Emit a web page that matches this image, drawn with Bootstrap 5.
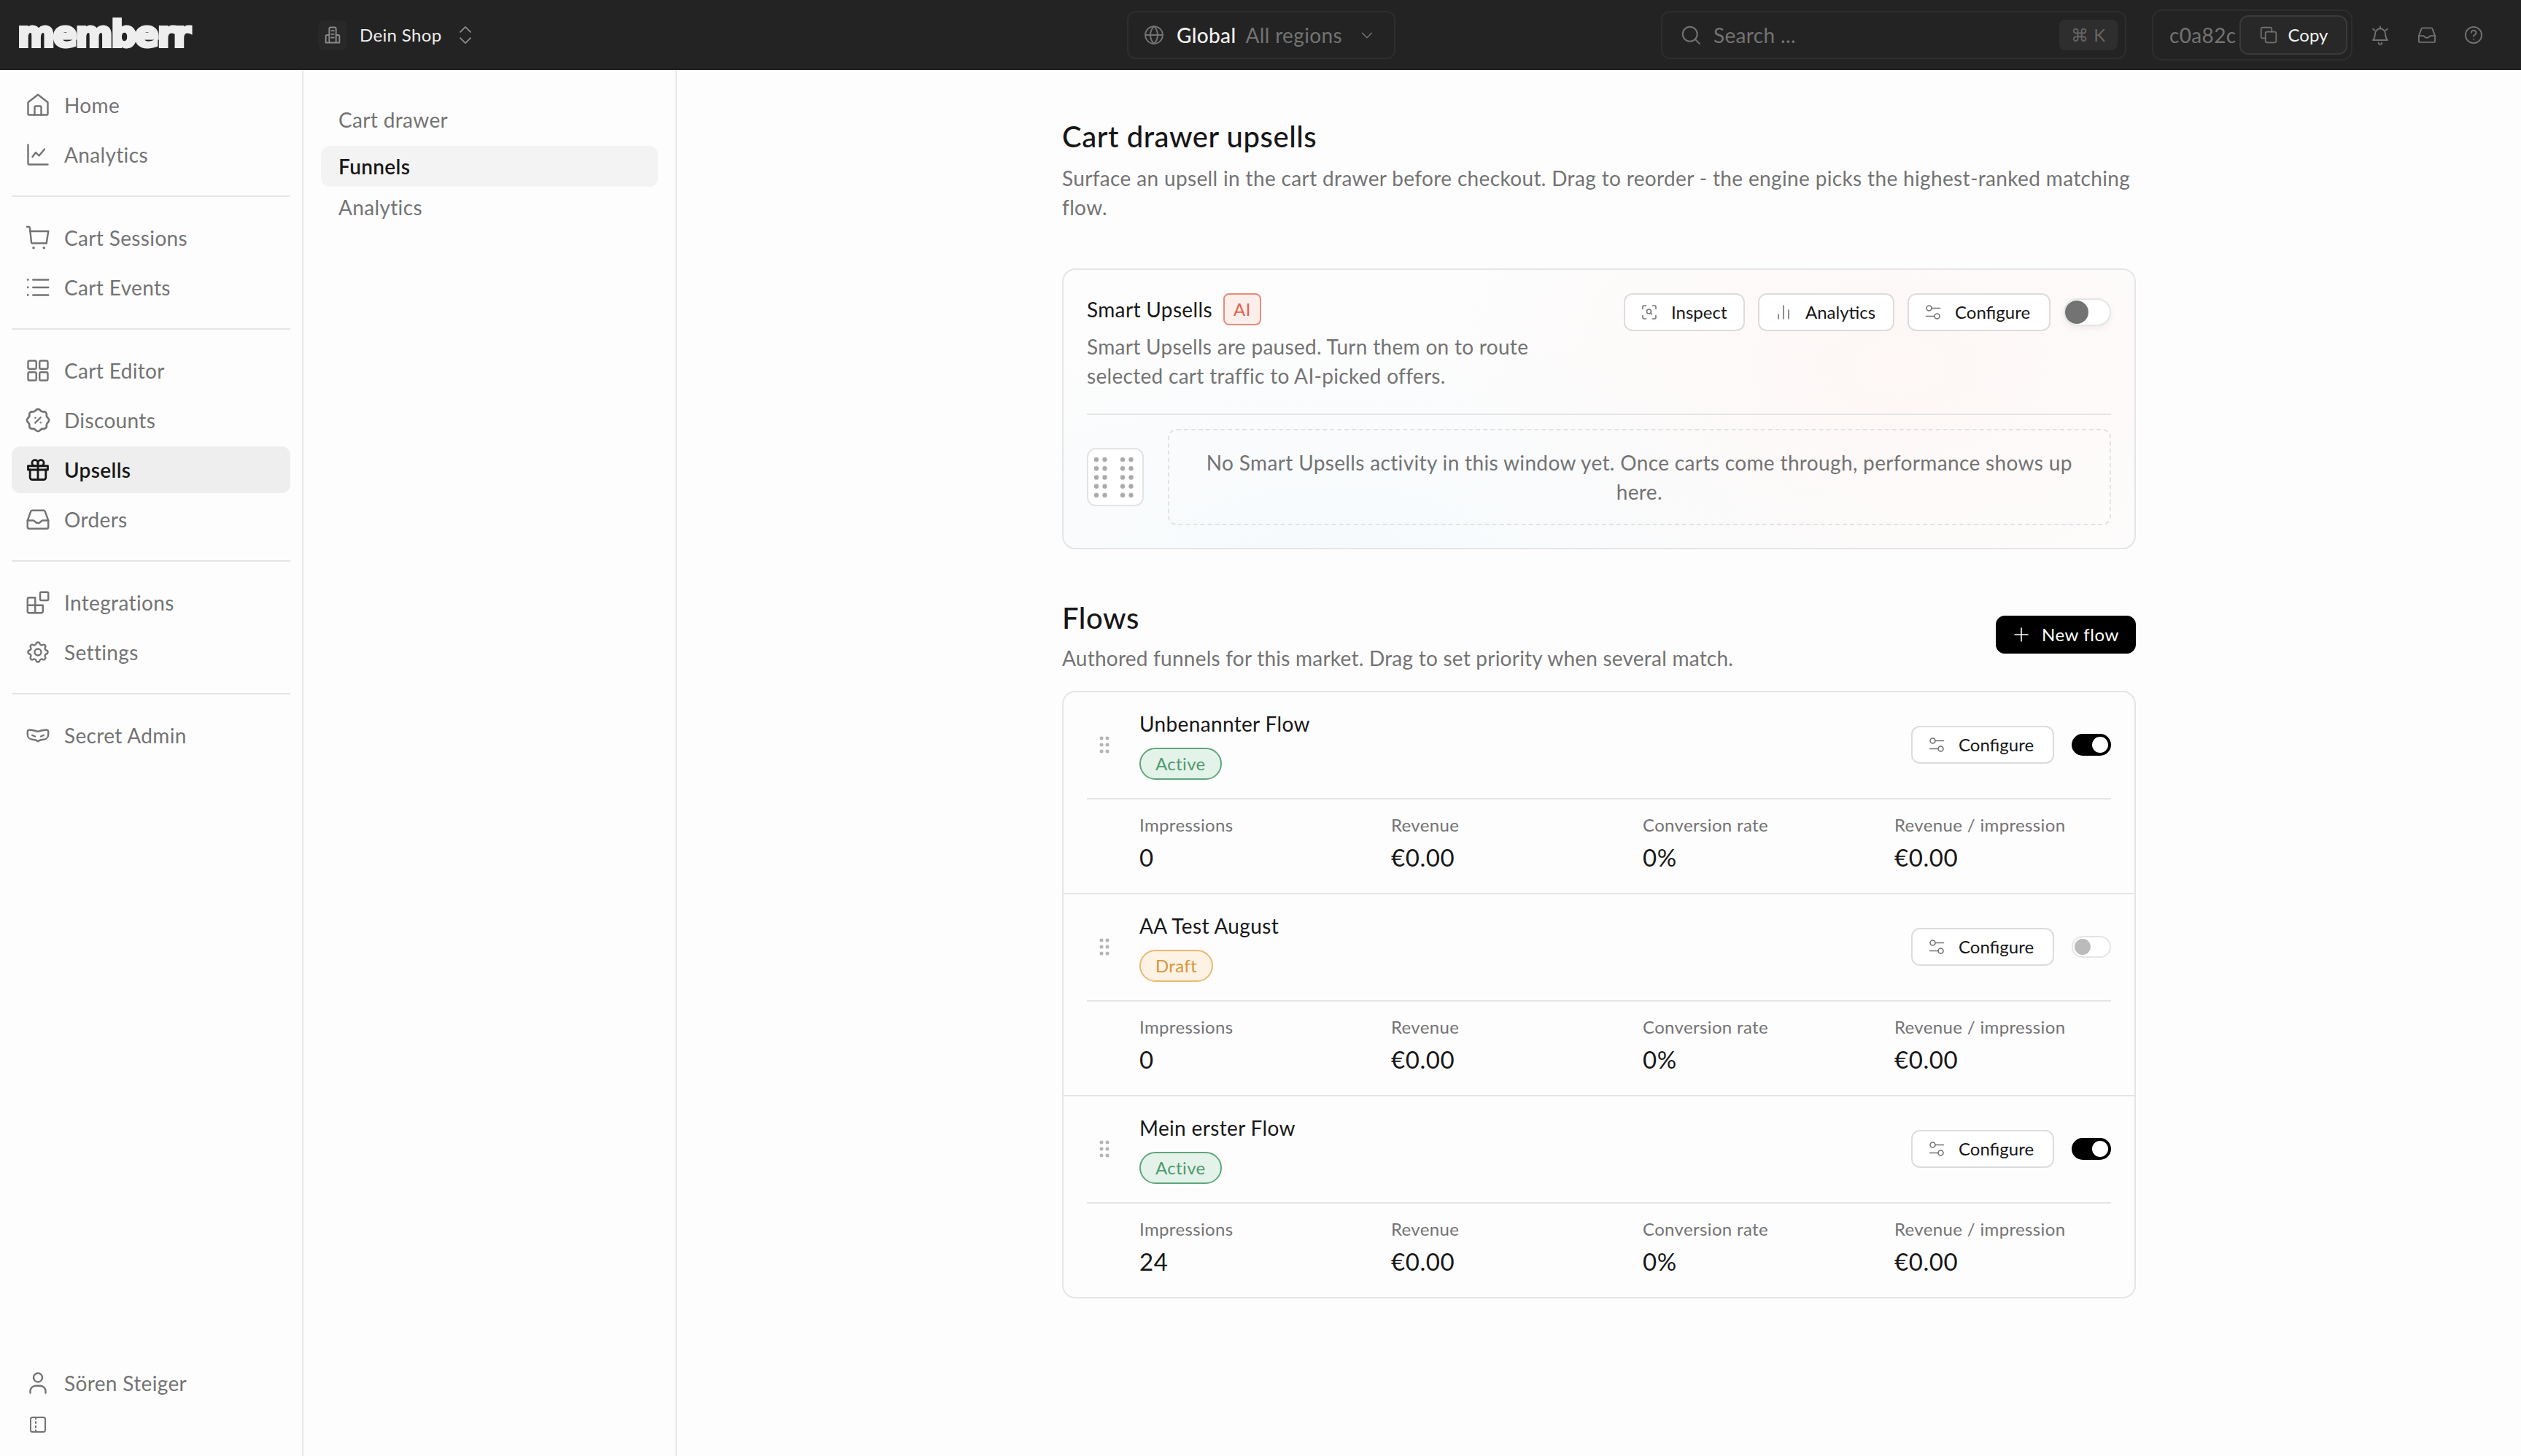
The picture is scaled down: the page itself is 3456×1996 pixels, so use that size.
<!DOCTYPE html>
<html lang="en">
<head>
<meta charset="utf-8">
<title>Cart drawer upsells</title>
<link href="https://cdn.jsdelivr.net/npm/bootstrap@5.3.0/dist/css/bootstrap.min.css" rel="stylesheet">
<style>
html,body{height:100%}
body{font-family:"Lato","Liberation Sans",sans-serif;font-size:28px;line-height:40px;letter-spacing:.35px;color:#171717;background:#fdfdfd;overflow:hidden}
svg.ic{fill:none;stroke:currentColor;stroke-width:1.6;stroke-linecap:round;stroke-linejoin:round;flex:none}
.app-shell{height:1996px}
.top-bar{height:96px;background:#232323;padding-left:24px;color:#eee}
.brand-area{width:412px;flex:none}
.brand-word{font-family:"DejaVu Sans",sans-serif;font-weight:700;font-size:49px;line-height:44px;letter-spacing:-2.4px;color:#eee;-webkit-text-stroke:4px #eee;display:block}
.shop-area{width:1109px;flex:none;font-size:24px;color:#eee}
.shop-icon{width:40px;height:40px;border-radius:8px;background:#282828;color:#8a8a8a;margin-right:17px}
.chev-pair{color:#8a8a8a;margin-left:19px}
.dark-box{border:2px solid #2e2e2e;border-radius:12px;height:66px;flex:none}
.region-box{width:368px;padding:0 26px 0 20px;margin-right:364px;color:#737373}
.region-box b{font-weight:500;color:#f2f2f2;margin:0 13px 0 16px}
.search-box{width:638px;padding:0 10px 0 24px;margin-right:35px;color:#737373}
.search-box span.txt{margin-left:16px}
.kbd-chip{width:80px;height:42px;background:#2e2e2e;border-radius:8px;color:#666;font-size:24px}
.token-box{width:275px;height:70px;padding:0 5px 0 22px;color:#737373;border-radius:14px}
.token-text{width:96px;overflow:hidden;font-size:28px;white-space:nowrap}
.copy-btn{--bs-btn-color:#f2f2f2;--bs-btn-bg:#282828;--bs-btn-border-color:#3a3a3a;--bs-btn-hover-color:#fff;--bs-btn-hover-bg:#2e2e2e;--bs-btn-hover-border-color:#3a3a3a;--bs-btn-border-width:2px;--bs-btn-border-radius:12px;--bs-btn-font-size:24px;--bs-btn-padding-x:0;--bs-btn-padding-y:0;width:148px;height:54px;gap:14px}
.copy-btn svg{color:#737373}
.top-icons{color:#737373;gap:36px;margin-left:24px}
.side-col{width:416px;border-right:2px solid #e8e8e8;padding:16px 16px 22px}
.side-link{height:64px;padding-left:18px;gap:18px;border-radius:12px;color:#737373;text-decoration:none}
.side-link + .side-link{margin-top:4px}
.side-link.on{background:#eeeeee;color:#171717;font-weight:600}
.side-link.on svg{stroke-width:1.9}
.side-rule{height:2px;background:#e5e5e5;margin:24px 0;opacity:1;border:0}
.panel-link{height:42px;margin-top:4px;padding-left:24px;color:#737373}
.sub-col{width:512px;border-right:2px solid #e8e8e8;padding:0 24px 0 24px}
.sub-head{padding:48px 0 0 24px;height:105px;margin-bottom:-1px;color:#737373;line-height:40px}
.sub-link{height:56px;padding-left:24px;border-radius:12px;color:#737373;text-decoration:none}
.sub-link.on{background:#f3f3f3;color:#171717;font-weight:600}
.main-col{min-width:0}
.main-wrap{width:1472px;margin:0 auto;padding-top:64px}
.title-h{font-family:inherit;font-size:40px;line-height:54px;font-weight:500;letter-spacing:.55px;margin:0;color:#171717}
.muted-txt{color:#737373}
.pad-desc{margin:10px 0 64px}
.smart-panel{height:385px;border:2px solid #e5e5e5;border-radius:18px;padding:32px;background:radial-gradient(ellipse 620px 380px at 78% 35%,rgba(255,232,226,.28),transparent),radial-gradient(ellipse 800px 300px at 25% 100%,rgba(226,240,250,.25),transparent),#fdfdfd}
.smart-name{height:44px}
.ai-chip{width:52px;height:44px;border:2px solid #e58d7c;border-radius:8px;background:#fbeeeb;color:#dd6650;font-size:24px;margin-left:15px}
.smart-copy{width:700px;margin-top:9px;letter-spacing:.3px}
.ghost-btn{--bs-btn-color:#171717;--bs-btn-bg:#fff;--bs-btn-border-color:#dcdcdc;--bs-btn-hover-color:#171717;--bs-btn-hover-bg:#fff;--bs-btn-hover-border-color:#dcdcdc;--bs-btn-border-width:2px;--bs-btn-border-radius:12px;--bs-btn-font-size:24px;--bs-btn-padding-x:21px;--bs-btn-padding-y:0;height:52px;gap:18px;white-space:nowrap}
.ghost-btn svg{color:#737373}
.w-cfg{width:196px}
.w-ana{width:187px}
.w-ins{width:166px}
.pill-switch{display:block;position:relative;border:2px solid #e5e5e5;border-radius:99px;background:#fff;flex:none}
.pill-switch i{position:absolute;top:50%;transform:translateY(-50%);border-radius:50%;display:block}
.sw-lg{width:65px;height:38px;box-shadow:0 4px 10px rgba(0,0,0,.05)}
.sw-lg i{left:0;width:32px;height:32px;background:#737373}
.sw-sm{width:54px;height:30px}
.sw-sm i{width:22px;height:22px}
.sw-sm.is-on{background:#000;border-color:#000}
.sw-sm.is-on i{right:2px;background:#fff}
.sw-sm.is-off i{left:2px;background:#bbb}
.smart-rule{height:2px;background:#e5e5e5;border:0;opacity:1;margin:32px 0 19px}
.dot-box{width:80px;height:80px;border:2px solid #e3e3e3;border-radius:12px;background:#fff;margin-right:33px}
.dash-box{height:132px;border:2px dashed #e3e3e3;border-radius:12px;padding:24px 36px;text-align:center;color:#737373}
.flows-head{margin-top:67px;margin-bottom:25px}
.solid-btn{--bs-btn-color:#fff;--bs-btn-bg:#000;--bs-btn-border-color:#000;--bs-btn-hover-color:#fff;--bs-btn-hover-bg:#000;--bs-btn-hover-border-color:#000;--bs-btn-border-radius:12px;--bs-btn-font-size:24px;--bs-btn-padding-x:0;--bs-btn-padding-y:0;width:192px;height:52px;gap:16px;margin-top:-3px;letter-spacing:.6px}
.flows-note{margin-top:8px;letter-spacing:.23px}
.flow-stack{border:2px solid #e5e5e5;border-radius:18px;background:#fdfdfd}
.flow-item{padding:23px 32px 27px;height:275px}
.flow-item + .flow-item{border-top:2px solid #e5e5e5;height:277px}
.grip-cell{width:48px;margin-right:24px;color:#b5b5b5}
.state-chip{display:inline-flex;align-items:center;height:44px;padding:0 20px;border-radius:99px;border:2px solid;font-size:24px;margin-top:13px}
.state-on{background:#e4f3ea;border-color:#5fa57c;color:#4f9a6f}
.state-draft{background:#fdf2e3;border-color:#e9b873;color:#d9953a}
.flow-rule{height:2px;background:#e5e5e5;border:0;opacity:1;margin:25px 0 17px}
.metric-cap{font-size:24px;line-height:36px;color:#737373}
.metric-val{font-size:33px;line-height:44px;margin-top:4px;letter-spacing:.6px;color:#171717}
.metric-row{margin-left:72px}
</style>
</head>
<body>
<svg width="0" height="0" class="position-absolute">
<defs>
<symbol id="i-home" viewBox="0 0 24 24"><path d="M3 20V9.500l9-7 9 7V20a1 1 0 0 1-1 1H4a1 1 0 0 1-1-1z"/><path d="M9 21v-7a1 1 0 0 1 1-1h4a1 1 0 0 1 1 1v7"/></symbol>
<symbol id="i-chart" viewBox="0 0 24 24"><path d="M3 3v17a1 1 0 0 0 1 1h17"/><path d="M7 14l3-4 3 3 5-6"/></symbol>
<symbol id="i-cart" viewBox="0 0 24 24"><path d="M2 2h1.600a1 1 0 0 1 1 .9L6 16a1 1 0 0 0 1 1h12.500"/><path d="M4.800 6H21.500l-1.700 11"/><path d="M8 21.200h.01M17.500 21.200h.01" stroke-width="2.400"/></symbol>
<symbol id="i-list" viewBox="0 0 24 24"><path d="M7.500 5h14M7.500 12h14M7.500 19h14"/><path d="M2.800 5h.01M2.800 12h.01M2.800 19h.01" stroke-width="1.900"/></symbol>
<symbol id="i-grid" viewBox="0 0 24 24"><rect x="3" y="3" width="7.500" height="7.500" rx="1.400"/><rect x="13.500" y="3" width="7.500" height="7.500" rx="1.400"/><rect x="3" y="13.500" width="7.500" height="7.500" rx="1.400"/><rect x="13.500" y="13.500" width="7.500" height="7.500" rx="1.400"/></symbol>
<symbol id="i-disc" viewBox="0 0 24 24"><path d="M5 7.200a2.200 2.200 0 0 1 2.200-2.200h1a2.200 2.200 0 0 0 1.550-.64l.7-.7a2.200 2.200 0 0 1 3.120 0l.7.7c.412.41.97.64 1.550.64h1a2.200 2.200 0 0 1 2.200 2.200v1c0 .58.23 1.138.64 1.550l.7.7a2.200 2.200 0 0 1 0 3.120l-.7.7a2.200 2.200 0 0 0-.64 1.550v1a2.200 2.200 0 0 1-2.200 2.200h-1a2.200 2.200 0 0 0-1.550.64l-.7.7a2.200 2.200 0 0 1-3.120 0l-.7-.7a2.200 2.200 0 0 0-1.550-.64h-1a2.200 2.200 0 0 1-2.200-2.200v-1a2.200 2.200 0 0 0-.64-1.550l-.7-.7a2.200 2.200 0 0 1 0-3.120l.7-.7a2.200 2.200 0 0 0 .64-1.550v-1" transform="translate(-1.400 -1.400) scale(1.120)"/><path d="M9.500 14.500l5-5M9.600 9.800h.01M14.400 14.200h.01"/></symbol>
<symbol id="i-gift" viewBox="0 0 24 24"><path d="M4.800 12v7a2 2 0 0 0 2 2h10.400a2 2 0 0 0 2-2v-7M12 5.500V21"/><path d="M12 8.500V5.500a2.700 2.700 0 1 0-2.700 3M12 8.500V5.500a2.700 2.700 0 1 1 2.700 3"/><path d="M3 8.500h18v3.500H3z"/></symbol>
<symbol id="i-inbox" viewBox="0 0 24 24"><path d="M2.500 13l3-8.200a1.500 1.500 0 0 1 1.400-1h10.200a1.500 1.500 0 0 1 1.400 1l3 8.200v6a1.500 1.500 0 0 1-1.500 1.500H4A1.500 1.500 0 0 1 2.500 19z"/><path d="M2.500 13H8c1 0 1.300 2.300 4 2.300s3-2.300 4-2.300h5.500"/></symbol>
<symbol id="i-plug" viewBox="0 0 24 24"><path d="M9.500 7.500H4A1.500 1.500 0 0 0 2.500 9v11A1.500 1.500 0 0 0 4 21.500h11a1.500 1.500 0 0 0 1.500-1.500v-5.500h-7zM2.500 14.500h7M9.500 14.500v7"/><rect x="14" y="2.500" width="7.500" height="7.500" rx="1"/></symbol>
<symbol id="i-gear" viewBox="0 0 24 24"><path d="M10.325 4.317c.426-1.756 2.924-1.756 3.350 0a1.724 1.724 0 0 0 2.573 1.066c1.543-.94 3.310.826 2.370 2.370a1.724 1.724 0 0 0 1.065 2.572c1.756.426 1.756 2.924 0 3.350a1.724 1.724 0 0 0-1.066 2.573c.94 1.543-.826 3.310-2.370 2.370a1.724 1.724 0 0 0-2.572 1.065c-.426 1.756-2.924 1.756-3.350 0a1.724 1.724 0 0 0-2.573-1.066c-1.543.94-3.310-.826-2.370-2.370a1.724 1.724 0 0 0-1.065-2.572c-1.756-.426-1.756-2.924 0-3.350a1.724 1.724 0 0 0 1.066-2.573c-.94-1.543.826-3.310 2.370-2.370 1 .608 2.296.07 2.572-1.065z"/><circle cx="12" cy="12" r="3"/></symbol>
<symbol id="i-mask" viewBox="0 0 24 24"><path d="M2.500 8.800c0-1.200 1-2 2.200-1.800 3 .4 5 .8 7.300 1.600 2.300-.8 4.300-1.200 7.300-1.600 1.200-.2 2.200.6 2.200 1.800v2.500c0 3-2.500 4.700-5.500 4.700-1.600 0-2.700.6-4 1.500-1.300-.9-2.400-1.500-4-1.500-3 0-5.500-1.700-5.500-4.700z"/><path d="M6.800 12l2.500 1M17.200 12l-2.500 1"/></symbol>
<symbol id="i-user" viewBox="0 0 24 24"><circle cx="12" cy="7" r="4"/><path d="M5 21v-1.500a5 5 0 0 1 5-5h4a5 5 0 0 1 5 5V21"/></symbol>
<symbol id="i-panel" viewBox="0 0 24 24"><rect x="2" y="2" width="20" height="20" rx="2.500" stroke-width="2"/><path d="M9 2.500v2M9 8v2M9 14v2M9 19.500v2" stroke-width="2"/></symbol>
<symbol id="i-build" viewBox="0 0 24 24"><path d="M8 21V4.500A1.500 1.500 0 0 1 9.500 3h5A1.500 1.500 0 0 1 16 4.500V21M8 12H5.500A1.500 1.500 0 0 0 4 13.500V21h16v-7.500a1.500 1.500 0 0 0-1.500-1.500H16M10.500 7h3M10.500 11h3M10.500 15h3"/></symbol>
<symbol id="i-updown" viewBox="0 0 24 24"><path d="M6 8.500l6-6 6 6M6 15.500l6 6 6-6"/></symbol>
<symbol id="i-globe" viewBox="0 0 24 24"><circle cx="12" cy="12" r="9.500"/><path d="M2.500 12h19M12 2.500c3 3 4 6 4 9.500s-1 6.500-4 9.500c-3-3-4-6-4-9.500s1-6.500 4-9.500z"/></symbol>
<symbol id="i-down" viewBox="0 0 24 24"><path d="M5 9l7 7 7-7"/></symbol>
<symbol id="i-search" viewBox="0 0 24 24"><circle cx="11" cy="11" r="8"/><path d="M17 17l4.500 4.500"/></symbol>
<symbol id="i-copy" viewBox="0 0 24 24"><rect x="8" y="8" width="13.500" height="13.500" rx="2"/><path d="M16 8V4.500a2 2 0 0 0-2-2H4.500a2 2 0 0 0-2 2V14a2 2 0 0 0 2 2H8"/></symbol>
<symbol id="i-bell" viewBox="0 0 24 24"><path d="M12 2v2.500M12 4.500a6 6 0 0 1 6 6c0 5 1.500 6 2.500 7.500h-17C4.500 16.500 6 15.500 6 10.500a6 6 0 0 1 6-6zM10 21a2 2 0 0 0 4 0"/><path d="M5.500 6.500l-2-1.500M18.500 6.500l2-1.500"/></symbol>
<symbol id="i-help" viewBox="0 0 24 24"><circle cx="12" cy="12" r="9.500"/><path d="M9.300 9.300a2.800 2.800 0 1 1 3.900 2.600c-.8.400-1.200 1-1.200 1.800M12 17h.01"/></symbol>
<symbol id="i-scan" viewBox="0 0 24 24"><path d="M3 7.500V4.500A1.500 1.500 0 0 1 4.500 3h3M16.500 3h3A1.500 1.500 0 0 1 21 4.500v3M3 16.500v3A1.500 1.500 0 0 0 4.500 21h3M16.500 21h3a1.500 1.500 0 0 0 1.500-1.500v-3"/><circle cx="11.500" cy="11" r="3"/><path d="M13.800 13.300l1.700 1.700"/></symbol>
<symbol id="i-bars" viewBox="0 0 24 24"><path d="M5 21v-6M12 21V3M19 21V9"/></symbol>
<symbol id="i-sliders" viewBox="0 0 24 24"><circle cx="6.500" cy="6.500" r="3.500"/><path d="M10 6.500h11.500"/><circle cx="17.500" cy="17.500" r="3.500"/><path d="M14 17.500H2.500"/></symbol>
<symbol id="i-plus" viewBox="0 0 24 24"><path d="M12 3v18M3 12h18"/></symbol>
<pattern id="dotgrid" width="36" height="12.200" patternUnits="userSpaceOnUse"><circle cx="5" cy="6" r="3.200" fill="#aaa" stroke="none"/><circle cx="16.500" cy="6" r="3.200" fill="#aaa" stroke="none"/></pattern>
</defs>
</svg>

<div class="app-shell d-flex flex-column">
  <header class="top-bar d-flex align-items-center flex-none">
    <div class="brand-area"><span class="brand-word">memberr</span></div>
    <div class="shop-area d-flex align-items-center">
      <span class="shop-icon d-inline-flex align-items-center justify-content-center"><svg class="ic" width="28" height="28"><use href="#i-build"/></svg></span>
      <span>Dein Shop</span>
      <svg class="ic chev-pair" width="28" height="30"><use href="#i-updown"/></svg>
    </div>
    <div class="dark-box region-box d-flex align-items-center">
      <svg class="ic" width="30" height="30"><use href="#i-globe"/></svg><b>Global</b><span>All regions</span>
      <svg class="ic ms-auto" width="22" height="22"><use href="#i-down"/></svg>
    </div>
    <div class="dark-box search-box d-flex align-items-center">
      <svg class="ic" width="30" height="30"><use href="#i-search"/></svg><span class="txt">Search ...</span>
      <span class="kbd-chip ms-auto d-inline-flex align-items-center justify-content-center">⌘ K</span>
    </div>
    <div class="dark-box token-box d-flex align-items-center">
      <span class="token-text">c0a82c</span>
      <button type="button" class="btn copy-btn d-inline-flex align-items-center justify-content-center"><svg class="ic" width="26" height="26"><use href="#i-copy"/></svg>Copy</button>
    </div>
    <div class="top-icons d-flex align-items-center">
      <svg class="ic" width="28" height="28"><use href="#i-bell"/></svg>
      <svg class="ic" width="28" height="28"><use href="#i-inbox"/></svg>
      <svg class="ic" width="28" height="28"><use href="#i-help"/></svg>
    </div>
  </header>

  <div class="d-flex flex-grow-1" style="min-height:0">
    <nav class="side-col d-flex flex-column flex-none">
      <a class="side-link d-flex align-items-center" href="#"><svg class="ic" width="36" height="36"><use href="#i-home"/></svg>Home</a>
      <a class="side-link d-flex align-items-center" href="#"><svg class="ic" width="36" height="36"><use href="#i-chart"/></svg>Analytics</a>
      <hr class="side-rule">
      <a class="side-link d-flex align-items-center" href="#"><svg class="ic" width="36" height="36"><use href="#i-cart"/></svg>Cart Sessions</a>
      <a class="side-link d-flex align-items-center" href="#"><svg class="ic" width="36" height="36"><use href="#i-list"/></svg>Cart Events</a>
      <hr class="side-rule">
      <a class="side-link d-flex align-items-center" href="#"><svg class="ic" width="36" height="36"><use href="#i-grid"/></svg>Cart Editor</a>
      <a class="side-link d-flex align-items-center" href="#"><svg class="ic" width="36" height="36"><use href="#i-disc"/></svg>Discounts</a>
      <a class="side-link on d-flex align-items-center" href="#"><svg class="ic" width="36" height="36"><use href="#i-gift"/></svg>Upsells</a>
      <a class="side-link d-flex align-items-center" href="#"><svg class="ic" width="36" height="36"><use href="#i-inbox"/></svg>Orders</a>
      <hr class="side-rule">
      <a class="side-link d-flex align-items-center" href="#"><svg class="ic" width="36" height="36"><use href="#i-plug"/></svg>Integrations</a>
      <a class="side-link d-flex align-items-center" href="#"><svg class="ic" width="36" height="36"><use href="#i-gear"/></svg>Settings</a>
      <hr class="side-rule">
      <a class="side-link d-flex align-items-center" href="#"><svg class="ic" width="36" height="36"><use href="#i-mask"/></svg>Secret Admin</a>
      <a class="side-link d-flex align-items-center mt-auto" href="#"><svg class="ic" width="36" height="36"><use href="#i-user"/></svg>Sören Steiger</a>
      <div class="panel-link d-flex align-items-center"><svg class="ic" width="24" height="24"><use href="#i-panel"/></svg></div>
    </nav>

    <aside class="sub-col flex-none">
      <div class="sub-head">Cart drawer</div>
      <a class="sub-link on d-flex align-items-center" href="#">Funnels</a>
      <a class="sub-link d-flex align-items-center" href="#">Analytics</a>
    </aside>

    <main class="main-col flex-grow-1">
      <div class="main-wrap">
        <h1 class="title-h">Cart drawer upsells</h1>
        <p class="muted-txt pad-desc">Surface an upsell in the cart drawer before checkout. Drag to reorder - the engine picks the highest-ranked matching flow.</p>

        <section class="smart-panel">
          <div class="d-flex justify-content-between align-items-start">
            <div>
              <div class="smart-name d-flex align-items-center"><span>Smart Upsells</span><span class="ai-chip d-inline-flex align-items-center justify-content-center">AI</span></div>
              <div class="smart-copy muted-txt">Smart Upsells are paused. Turn them on to route selected cart traffic to AI-picked offers.</div>
            </div>
            <div class="d-flex align-items-center" style="gap:18px">
              <button type="button" class="btn ghost-btn w-ins d-inline-flex align-items-center"><svg class="ic" width="24" height="24"><use href="#i-scan"/></svg>Inspect</button>
              <button type="button" class="btn ghost-btn w-ana d-inline-flex align-items-center"><svg class="ic" width="24" height="24"><use href="#i-bars"/></svg>Analytics</button>
              <button type="button" class="btn ghost-btn w-cfg d-inline-flex align-items-center"><svg class="ic" width="24" height="24"><use href="#i-sliders"/></svg>Configure</button>
              <span class="pill-switch sw-lg"><i></i></span>
            </div>
          </div>
          <hr class="smart-rule">
          <div class="d-flex align-items-center">
            <div class="dot-box flex-none d-flex align-items-center justify-content-center"><svg width="62" height="61"><rect width="62" height="61" fill="url(#dotgrid)"/></svg></div>
            <div class="dash-box flex-grow-1">No Smart Upsells activity in this window yet. Once carts come through, performance shows up here.</div>
          </div>
        </section>

        <div class="flows-head d-flex justify-content-between align-items-center">
          <div>
            <h2 class="title-h">Flows</h2>
            <p class="muted-txt mb-0 flows-note">Authored funnels for this market. Drag to set priority when several match.</p>
          </div>
          <button type="button" class="btn solid-btn d-inline-flex align-items-center justify-content-center"><svg class="ic" width="24" height="24"><use href="#i-plus"/></svg>New flow</button>
        </div>

        <section class="flow-stack">
          <article class="flow-item">
            <div class="d-flex align-items-center">
              <div class="grip-cell d-flex justify-content-center"><svg width="14" height="24" fill="currentColor"><circle cx="3" cy="3" r="2.500"/><circle cx="11" cy="3" r="2.500"/><circle cx="3" cy="12" r="2.500"/><circle cx="11" cy="12" r="2.500"/><circle cx="3" cy="21" r="2.500"/><circle cx="11" cy="21" r="2.500"/></svg></div>
              <div class="flex-grow-1"><div>Unbenannter Flow</div><span class="state-chip state-on">Active</span></div>
              <button type="button" class="btn ghost-btn w-cfg d-inline-flex align-items-center"><svg class="ic" width="24" height="24"><use href="#i-sliders"/></svg>Configure</button>
              <span class="pill-switch sw-sm is-on ms-4"><i></i></span>
            </div>
            <hr class="flow-rule">
            <div class="metric-row"><div class="row gx-5">
              <div class="col-3"><div class="metric-cap">Impressions</div><div class="metric-val">0</div></div>
              <div class="col-3"><div class="metric-cap">Revenue</div><div class="metric-val">€0.00</div></div>
              <div class="col-3"><div class="metric-cap">Conversion rate</div><div class="metric-val">0%</div></div>
              <div class="col-3"><div class="metric-cap">Revenue / impression</div><div class="metric-val">€0.00</div></div>
            </div></div>
          </article>
          <article class="flow-item">
            <div class="d-flex align-items-center">
              <div class="grip-cell d-flex justify-content-center"><svg width="14" height="24" fill="currentColor"><circle cx="3" cy="3" r="2.500"/><circle cx="11" cy="3" r="2.500"/><circle cx="3" cy="12" r="2.500"/><circle cx="11" cy="12" r="2.500"/><circle cx="3" cy="21" r="2.500"/><circle cx="11" cy="21" r="2.500"/></svg></div>
              <div class="flex-grow-1"><div>AA Test August</div><span class="state-chip state-draft">Draft</span></div>
              <button type="button" class="btn ghost-btn w-cfg d-inline-flex align-items-center"><svg class="ic" width="24" height="24"><use href="#i-sliders"/></svg>Configure</button>
              <span class="pill-switch sw-sm is-off ms-4"><i></i></span>
            </div>
            <hr class="flow-rule">
            <div class="metric-row"><div class="row gx-5">
              <div class="col-3"><div class="metric-cap">Impressions</div><div class="metric-val">0</div></div>
              <div class="col-3"><div class="metric-cap">Revenue</div><div class="metric-val">€0.00</div></div>
              <div class="col-3"><div class="metric-cap">Conversion rate</div><div class="metric-val">0%</div></div>
              <div class="col-3"><div class="metric-cap">Revenue / impression</div><div class="metric-val">€0.00</div></div>
            </div></div>
          </article>
          <article class="flow-item">
            <div class="d-flex align-items-center">
              <div class="grip-cell d-flex justify-content-center"><svg width="14" height="24" fill="currentColor"><circle cx="3" cy="3" r="2.500"/><circle cx="11" cy="3" r="2.500"/><circle cx="3" cy="12" r="2.500"/><circle cx="11" cy="12" r="2.500"/><circle cx="3" cy="21" r="2.500"/><circle cx="11" cy="21" r="2.500"/></svg></div>
              <div class="flex-grow-1"><div>Mein erster Flow</div><span class="state-chip state-on">Active</span></div>
              <button type="button" class="btn ghost-btn w-cfg d-inline-flex align-items-center"><svg class="ic" width="24" height="24"><use href="#i-sliders"/></svg>Configure</button>
              <span class="pill-switch sw-sm is-on ms-4"><i></i></span>
            </div>
            <hr class="flow-rule">
            <div class="metric-row"><div class="row gx-5">
              <div class="col-3"><div class="metric-cap">Impressions</div><div class="metric-val">24</div></div>
              <div class="col-3"><div class="metric-cap">Revenue</div><div class="metric-val">€0.00</div></div>
              <div class="col-3"><div class="metric-cap">Conversion rate</div><div class="metric-val">0%</div></div>
              <div class="col-3"><div class="metric-cap">Revenue / impression</div><div class="metric-val">€0.00</div></div>
            </div></div>
          </article>
        </section>
      </div>
    </main>
  </div>
</div>
<script src="https://cdn.jsdelivr.net/npm/bootstrap@5.3.0/dist/js/bootstrap.bundle.min.js"></script>
</body>
</html>
